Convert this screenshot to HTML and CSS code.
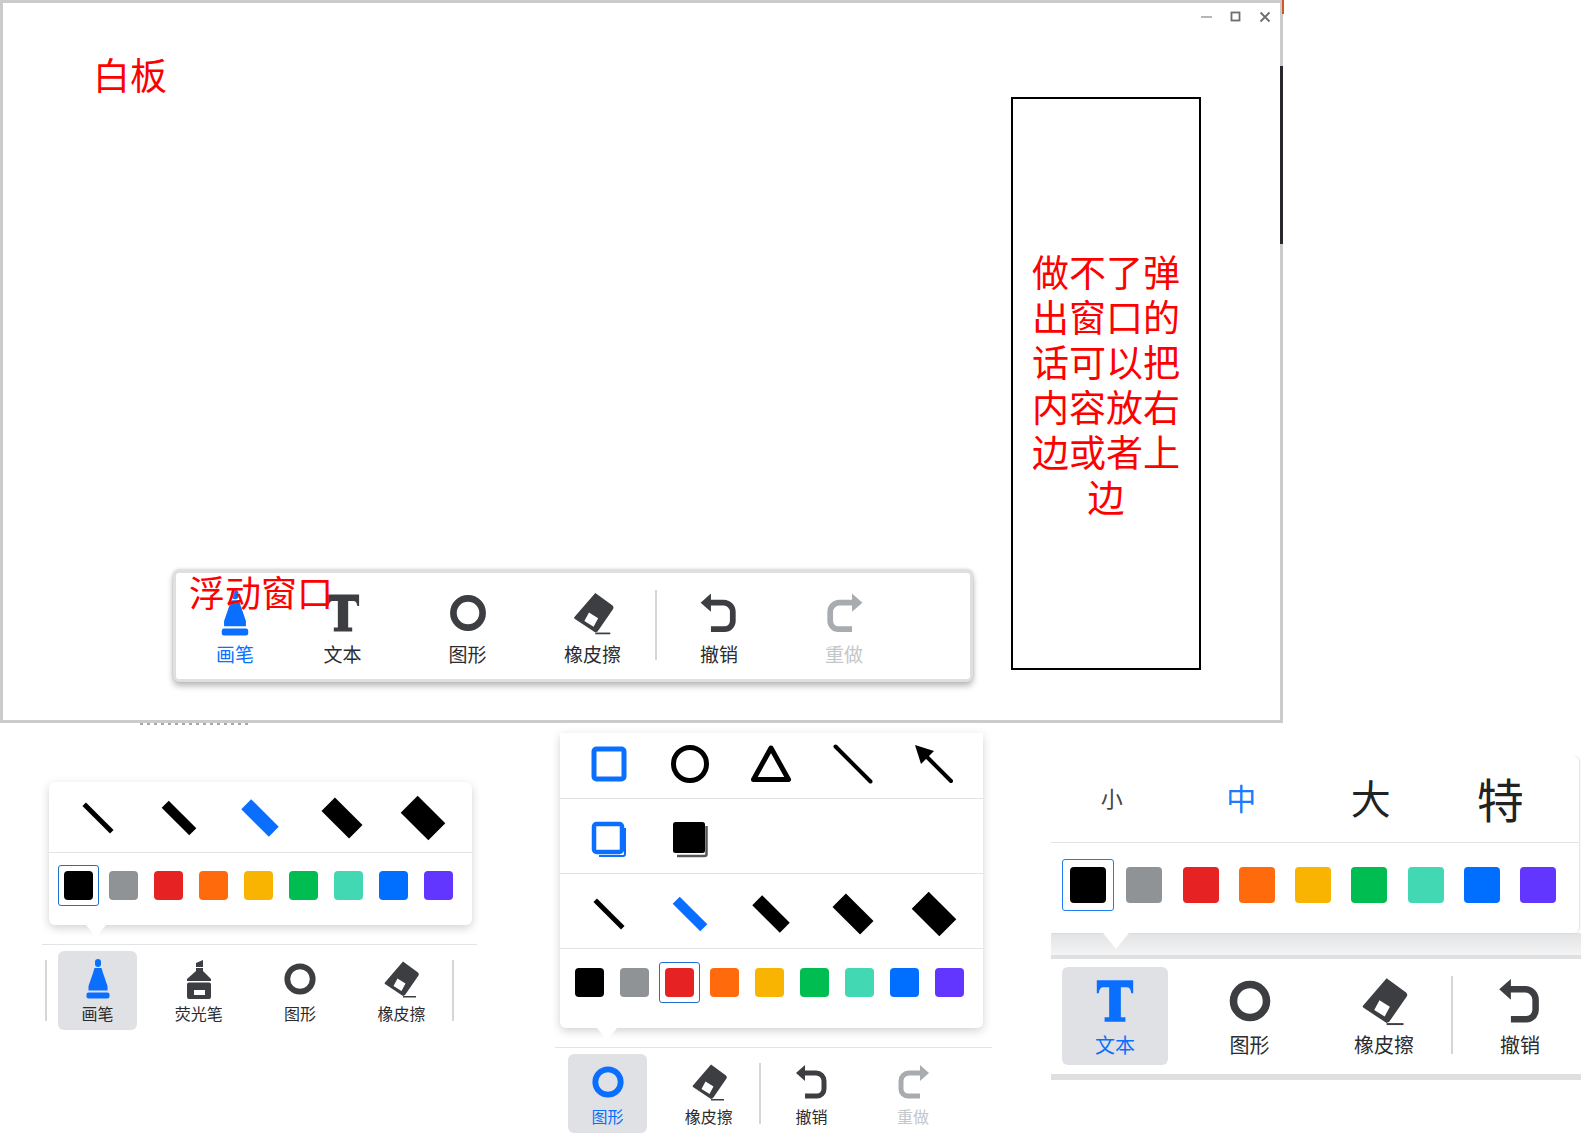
FILE: index.html
```html
<!DOCTYPE html>
<html lang="zh-CN">
<head>
    <meta charset="UTF-8">
    <title>白板</title>
    <link rel="stylesheet" href="styles.css">
</head>
<body>
    <svg class="defs" aria-hidden="true">
        <symbol id="ic-pen" viewBox="0 0 40 40">
            <rect x="17" y="0" width="6" height="8" rx="3"/>
            <path d="M16.500 9H23.500L25 14L29.500 27V31.500H10.500V27L15 14Z"/>
            <rect x="8.500" y="33.500" width="23" height="6" rx="2"/>
        </symbol>
        <symbol id="ic-marker" viewBox="0 0 40 40">
            <path d="M17 4L24 1V8H17Z"/>
            <path d="M17 9H24V12L32 20V22H8V20L17 12Z"/>
            <path fill-rule="evenodd" d="M10 23.500H30A2 2 0 0 1 32 25.500V38A2 2 0 0 1 30 40H10A2 2 0 0 1 8 38V25.500A2 2 0 0 1 10 23.500ZM15 31V36H26V31Z"/>
        </symbol>
        <symbol id="ic-text" viewBox="0 0 40 40">
            <path d="M6 4H34V14H32.500Q32 9.500 29 9.500H24.500V32.500H28V36H12V32.500H15.500V9.500H11Q8 9.500 7.500 14H6Z"/>
        </symbol>
        <symbol id="ic-ring" viewBox="0 0 40 40">
            <circle cx="20" cy="20" r="12.700" fill="none" stroke="currentColor" stroke-width="5.800"/>
        </symbol>
        <symbol id="ic-eraser" viewBox="0 0 40 40">
            <path fill-rule="evenodd" d="M22 2.500L37 13.500Q38.500 15 37.500 16.500L24 36L22 37L4 25L3.500 24ZM16.500 19.500L12.500 27L20.500 32L24.500 24.500Z"/>
            <rect x="22" y="37" width="13" height="1.500"/>
        </symbol>
        <symbol id="ic-undo" viewBox="0 0 40 40">
            <path d="M13 3V19L4 11Z"/>
            <path d="M12 11H24A8 8 0 0 1 32 19V27A7 7 0 0 1 25 34H13" fill="none" stroke="currentColor" stroke-width="5"/>
        </symbol>
        <symbol id="ic-redo" viewBox="0 0 40 40">
            <path d="M27 3V19L36 11Z"/>
            <path d="M28 11H16A8 8 0 0 0 8 19V27A7 7 0 0 0 15 34H27" fill="none" stroke="currentColor" stroke-width="5"/>
        </symbol>
        <symbol id="w5" viewBox="0 0 60 60"><line x1="16.200" y1="16.200" x2="43.800" y2="43.800" stroke="currentColor" stroke-width="5"/></symbol>
        <symbol id="w10" viewBox="0 0 60 60"><line x1="16.200" y1="16.200" x2="43.800" y2="43.800" stroke="currentColor" stroke-width="10"/></symbol>
        <symbol id="w14" viewBox="0 0 60 60"><line x1="16.200" y1="16.200" x2="43.800" y2="43.800" stroke="currentColor" stroke-width="14"/></symbol>
        <symbol id="w19" viewBox="0 0 60 60"><line x1="16.200" y1="16.200" x2="43.800" y2="43.800" stroke="currentColor" stroke-width="19"/></symbol>
        <symbol id="w24" viewBox="0 0 60 60"><line x1="16.200" y1="16.200" x2="43.800" y2="43.800" stroke="currentColor" stroke-width="24"/></symbol>
    </svg>

    <!-- 白板窗口 -->
    <div class="window">
        <div class="win-controls">
            <svg viewBox="0 0 12 12"><line x1="0" y1="6" x2="11" y2="6" stroke="#b4b6b8" stroke-width="2"/></svg>
            <svg viewBox="0 0 12 12"><rect x="1.500" y="1.500" width="8" height="8" fill="none" stroke="#6c6e72" stroke-width="1.800"/></svg>
            <svg viewBox="0 0 12 12"><path d="M1.500 1.500L10.500 10.500M10.500 1.500L1.500 10.500" stroke="#6c6e72" stroke-width="1.800"/></svg>
        </div>
        <div class="win-title">白板</div>
        <div class="note">做不了弹出窗口的话可以把内容放右边或者上边</div>

        <div class="toolbar">
            <div class="tools">
                <div class="tool active-text pen-gap"><svg class="icon"><use href="#ic-pen"/></svg><span>画笔</span></div>
                <div class="tool"><svg class="icon"><use href="#ic-text"/></svg><span>文本</span></div>
                <div class="tool"><svg class="icon"><use href="#ic-ring"/></svg><span>图形</span></div>
                <div class="tool"><svg class="icon"><use href="#ic-eraser"/></svg><span>橡皮擦</span></div>
                <div class="sep"></div>
                <div class="tool"><svg class="icon"><use href="#ic-undo"/></svg><span>撤销</span></div>
                <div class="tool disabled"><svg class="icon"><use href="#ic-redo"/></svg><span>重做</span></div>
            </div>
            <div class="float-label">浮动窗口</div>
        </div>
        <div class="edge-bar"></div>
        <div class="edge-mark"></div>
        <div class="cut-strip"></div>
    </div>

    <!-- 画笔面板 -->
    <div class="demo demo-pen">
        <div class="popup">
            <div class="row strokes">
                <svg><use href="#w5"/></svg>
                <svg><use href="#w10"/></svg>
                <svg class="on"><use href="#w14"/></svg>
                <svg><use href="#w19"/></svg>
                <svg><use href="#w24"/></svg>
            </div>
            <div class="swatches">
                <i class="selected c-black"></i><i class="c-gray"></i><i class="c-red"></i><i class="c-orange"></i><i class="c-yellow"></i><i class="c-green"></i><i class="c-teal"></i><i class="c-blue"></i><i class="c-purple"></i>
            </div>
        </div>
        <div class="tools">
            <div class="sep"></div>
            <div class="tool active"><svg class="icon"><use href="#ic-pen"/></svg><span>画笔</span></div>
            <div class="tool"><svg class="icon"><use href="#ic-marker"/></svg><span>荧光笔</span></div>
            <div class="tool"><svg class="icon"><use href="#ic-ring"/></svg><span>图形</span></div>
            <div class="tool"><svg class="icon"><use href="#ic-eraser"/></svg><span>橡皮擦</span></div>
            <div class="sep"></div>
        </div>
    </div>

    <!-- 图形面板 -->
    <div class="demo demo-shape">
        <div class="popup">
            <div class="row strokes shapes">
                <svg class="on" viewBox="0 0 60 60"><rect x="15" y="15" width="30" height="30" rx="2.500" fill="none" stroke="currentColor" stroke-width="5"/></svg>
                <svg viewBox="0 0 60 60"><circle cx="30" cy="30" r="16.500" fill="none" stroke="currentColor" stroke-width="5"/></svg>
                <svg viewBox="0 0 60 60"><path d="M30 14L47.500 45.500H12.500Z" fill="none" stroke="currentColor" stroke-width="5" stroke-linejoin="round"/></svg>
                <svg viewBox="0 0 60 60"><line x1="12.500" y1="12.500" x2="47.500" y2="47.500" stroke="currentColor" stroke-width="4" stroke-linecap="round"/></svg>
                <svg viewBox="0 0 60 60"><line x1="47" y1="47" x2="19" y2="19" stroke="currentColor" stroke-width="4" stroke-linecap="round"/><path d="M11 11L30 17L17 30Z"/></svg>
            </div>
            <div class="row strokes">
                <svg class="on" viewBox="0 0 60 60"><rect x="15" y="15" width="28" height="28" rx="2.500" fill="none" stroke="currentColor" stroke-width="4.500"/><path d="M46 19V45A2 2 0 0 1 44 47H20" fill="none" stroke="currentColor" stroke-width="2"/></svg>
                <svg viewBox="0 0 60 60"><rect x="13" y="13" width="32" height="31" rx="2.500"/><path d="M46.500 17V45A2 2 0 0 1 44.500 47H17" fill="none" stroke="#55575b" stroke-width="2.500"/></svg>
                <span></span><span></span><span></span>
            </div>
            <div class="row strokes">
                <svg><use href="#w5"/></svg>
                <svg class="on"><use href="#w10"/></svg>
                <svg><use href="#w14"/></svg>
                <svg><use href="#w19"/></svg>
                <svg><use href="#w24"/></svg>
            </div>
            <div class="swatches">
                <i class="c-black"></i><i class="c-gray"></i><i class="selected c-red"></i><i class="c-orange"></i><i class="c-yellow"></i><i class="c-green"></i><i class="c-teal"></i><i class="c-blue"></i><i class="c-purple"></i>
            </div>
        </div>
        <div class="tools">
            <div class="tool active active-text"><svg class="icon"><use href="#ic-ring"/></svg><span>图形</span></div>
            <div class="tool"><svg class="icon"><use href="#ic-eraser"/></svg><span>橡皮擦</span></div>
            <div class="sep"></div>
            <div class="tool"><svg class="icon"><use href="#ic-undo"/></svg><span>撤销</span></div>
            <div class="tool disabled"><svg class="icon"><use href="#ic-redo"/></svg><span>重做</span></div>
        </div>
    </div>

    <!-- 文本面板 -->
    <div class="demo demo-text">
        <div class="popup">
            <div class="row sizes">
                <span class="size-s">小</span>
                <span class="size-m">中</span>
                <span class="size-l">大</span>
                <span class="size-xl">特</span>
            </div>
            <div class="swatches">
                <i class="selected c-black"></i><i class="c-gray"></i><i class="c-red"></i><i class="c-orange"></i><i class="c-yellow"></i><i class="c-green"></i><i class="c-teal"></i><i class="c-blue"></i><i class="c-purple"></i>
            </div>
        </div>
        <div class="tools">
            <div class="tool active active-text"><svg class="icon"><use href="#ic-text"/></svg><span>文本</span></div>
            <div class="tool"><svg class="icon"><use href="#ic-ring"/></svg><span>图形</span></div>
            <div class="tool"><svg class="icon"><use href="#ic-eraser"/></svg><span>橡皮擦</span></div>
            <div class="sep"></div>
            <div class="tool"><svg class="icon"><use href="#ic-undo"/></svg><span>撤销</span></div>
        </div>
    </div>
</body>
</html>
```

FILE: styles.css
```css
* {
    box-sizing: border-box;
}

html, body {
    margin: 0;
    height: 100%;
    overflow: hidden;
}

body {
    position: relative;
    background-color: #fff;
    font-family: "Noto Sans CJK SC", "Noto Sans", sans-serif;
    color: #222;
}

.defs {
    position: absolute;
    width: 0;
    height: 0;
}

/* window */
.window {
    position: absolute;
    left: 0;
    top: 0;
    width: 1283px;
    height: 723px;
    border: 3px solid #cbcbcb;
}

.win-controls {
    position: absolute;
    right: 9px;
    top: 8px;
    display: flex;
    gap: 17px;
}

.win-controls svg {
    width: 12px;
    height: 12px;
}

.win-title {
    position: absolute;
    left: 90px;
    top: 46px;
    font-size: 37px;
    line-height: 50px;
    color: #f00;
}

.note {
    position: absolute;
    left: 1008px;
    top: 94px;
    width: 190px;
    height: 573px;
    padding: 0 10px;
    border: 2px solid #000;
    display: flex;
    align-items: center;
    text-align: center;
    font-size: 37px;
    line-height: 45px;
    color: #f00;
}

.edge-bar {
    position: absolute;
    right: -3px;
    top: 63px;
    width: 3px;
    height: 178px;
    background-color: #26282c;
}

.edge-mark {
    position: absolute;
    right: -4px;
    top: -3px;
    width: 2px;
    height: 14px;
    background-color: #d9541e;
}

/* bottom edge of some text cut off by the crop */
.cut-strip {
    position: absolute;
    left: 137px;
    top: 720px;
    width: 110px;
    height: 2px;
    background: repeating-linear-gradient(90deg, #a8a8a8 0 3px, #fff 3px 7px);
}

/* floating toolbar */
.toolbar {
    position: absolute;
    left: 170px;
    top: 567px;
    width: 800px;
    height: 112px;
    padding: 17px 0 0 14px;
    background-color: #fff;
    border: 3px solid #dedfe0;
    border-radius: 6px;
    box-shadow: 0 4px 6px rgba(0, 0, 0, 0.28), 0 -1px 3px rgba(0, 0, 0, 0.15);
}

.float-label {
    position: absolute;
    left: 13px;
    top: -4px;
    font-size: 36px;
    line-height: 44px;
    color: #f00;
}

/* tool row */
.tools {
    display: flex;
    --pitch-gap: 22.3px;
    gap: var(--pitch-gap);
}

.tool {
    flex: none;
    width: 79px;
    height: 79px;
    padding-top: 8px;
    border-radius: 6px;
    display: flex;
    flex-direction: column;
    align-items: center;
    font-size: 16px;
    line-height: 22px;
    color: #2a2c30;
}

.icon {
    flex: none;
    width: 40px;
    height: 40px;
    color: #3c3e42;
    fill: currentColor;
    margin-bottom: 3px;
}

.tool.active {
    background-color: #e0e1e5;
}

.tool.active .icon,
.active-text .icon {
    color: #0a6fff;
}

.active-text span {
    color: #0a6fff;
}

.disabled .icon {
    color: #a8abaf;
}

.disabled span {
    color: #c4c6c9;
}

.sep {
    flex: none;
    width: 1.5px;
    height: 61px;
    margin: 9px calc(var(--pitch-gap) / -2) 0;
    background-color: #d5d6d8;
}

.toolbar .tools {
    --pitch-gap: 35px;
}

.toolbar .tool {
    width: 90px;
    height: auto;
    padding-top: 0;
    font-size: 19px;
    line-height: 26px;
}

.toolbar .pen-gap {
    margin-right: -17.500px;
}

.toolbar .icon {
    width: 46px;
    height: 46px;
    margin-bottom: 5px;
}

.toolbar .sep {
    height: 70px;
    margin-top: 0;
}

/* demo panels */
.demo {
    position: absolute;
}

.demo .tools {
    border-top: 1px solid #e2e3e5;
    padding-top: 6px;
}

.demo-pen {
    left: 42px;
    top: 782px;
    width: 435px;
}

.demo-pen .popup {
    margin-left: 7px;
    height: 143px;
    margin-bottom: 19px;
    border-radius: 6px;
}

.demo-pen .tools {
    padding-left: 14.500px;
}

.demo-shape {
    left: 555px;
    top: 733px;
    width: 437px;
}

.demo-shape .popup {
    margin-left: 5px;
    height: 295px;
    margin-bottom: 19px;
    border-radius: 0 0 6px 6px;
}

.demo-shape .tools {
    padding-left: 13px;
}

.popup {
    position: relative;
    width: 423px;
    background-color: #fff;
    box-shadow: 0 3px 10px rgba(0, 0, 0, 0.18);
}

/* little arrow under the popup */
.popup::after {
    content: "";
    position: absolute;
    left: 37px;
    bottom: -12px;
    width: 20px;
    height: 12px;
    background-color: #fff;
    clip-path: polygon(0 0, 100% 0, 50% 100%);
}

.row {
    border-bottom: 1px solid #e2e3e5;
}

.strokes {
    display: grid;
    grid-template-columns: repeat(5, 81.2px);
    padding: 1px 8.500px 0;
    justify-items: center;
    align-items: center;
    height: 71px;
    color: #000;
}

.demo-shape .strokes {
    height: 75px;
    padding-top: 6px;
}

.demo-shape .shapes {
    height: 66px;
    padding: 0 8.500px 4px;
}

.strokes svg {
    width: 60px;
    height: 60px;
}

.strokes .on {
    color: #0a6fff;
}

.swatches {
    display: flex;
    gap: 16px;
    padding: 18px 15px 0;
}

.demo-shape .swatches {
    padding-top: 19px;
}

.swatches i {
    flex: none;
    width: 29px;
    height: 29px;
    border-radius: 4px;
}

.swatches .selected {
    position: relative;
}

.swatches .selected::before {
    content: "";
    position: absolute;
    inset: -6px;
    border: 1.200px solid #1f6fd0;
    border-radius: 3px;
}

.c-black { background-color: #000; }
.c-gray { background-color: #909396; }
.c-red { background-color: #e62222; }
.c-orange { background-color: #ff6a0d; }
.c-yellow { background-color: #f8b400; }
.c-green { background-color: #00bd52; }
.c-teal { background-color: #42d8b4; }
.c-blue { background-color: #006eff; }
.c-purple { background-color: #6336ff; }

/* text panel */
.demo-text {
    left: 1051px;
    top: 756px;
    width: 530px;
    overflow: hidden;
}

.demo-text .popup {
    width: 528px;
    height: 177px;
    border-radius: 0 6px 6px 0;
    box-shadow: 1px 0 2px rgba(0, 0, 0, 0.12);
    z-index: 1;
    margin-right: 2px;
}

.demo-text .popup::after {
    left: 52px;
    bottom: -16px;
    width: 26px;
    height: 16px;
}

.sizes {
    display: grid;
    grid-template-columns: repeat(4, 129.5px);
    height: 87px;
    padding-bottom: 4px;
    align-items: center;
    justify-items: center;
    color: #222;
    text-indent: -8px;
}

.size-s { font-size: 22px; color: #444; }
.size-m { font-size: 30px; color: #1d7bff; }
.size-l { font-size: 40px; }
.size-xl { font-size: 47px; }

.demo-text .swatches {
    gap: 20.300px;
    padding: 24px 19px 0;
}

.demo-text .swatches i {
    width: 36px;
    height: 36px;
}

.demo-text .swatches .selected::before {
    inset: -8px;
    border-color: #1f7bf0;
}

.demo-text .tools {
    --pitch-gap: 28.500px;
    position: relative;
    height: 125px;
    padding: 8px 0 0 11px;
    border-top: 4px solid #dfe0e2;
    border-bottom: 6px solid #dedfe1;
    margin-top: 22px;
}

.demo-text .tools::before {
    content: "";
    position: absolute;
    left: 0;
    right: 0;
    top: -26px;
    height: 22px;
    background: linear-gradient(#e2e3e4, #f4f4f5);
}

.demo-text .tool {
    width: 106px;
    height: 98px;
    padding-top: 8px;
    font-size: 20px;
    line-height: 28px;
}

.demo-text .icon {
    width: 52px;
    height: 52px;
    margin-bottom: 4px;
}

.demo-text .sep {
    height: 78px;
    margin-top: 9px;
}
```
